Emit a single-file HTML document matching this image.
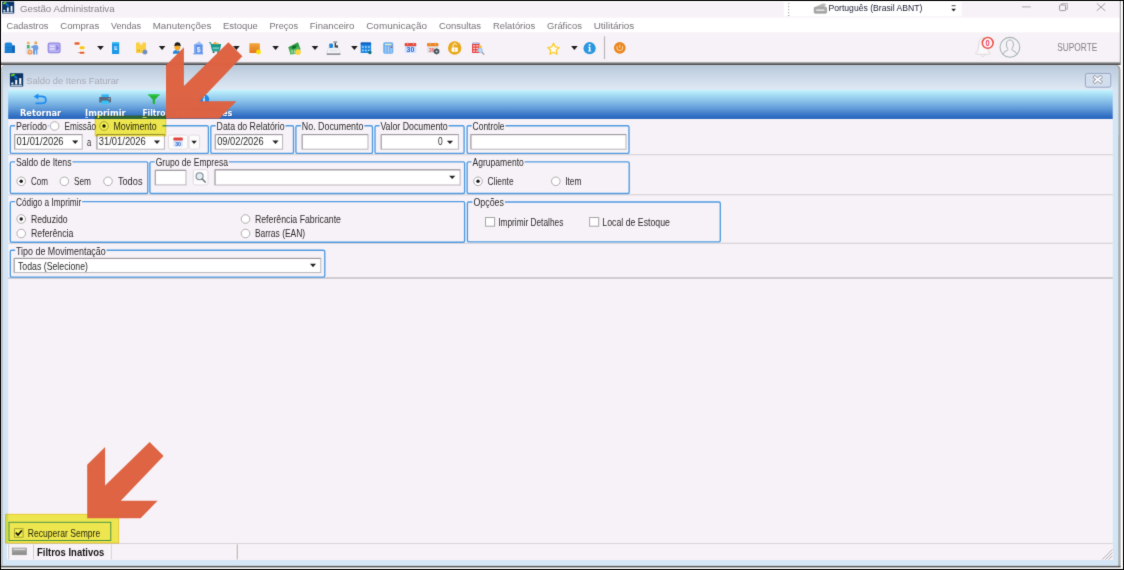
<!DOCTYPE html>
<html lang="pt-BR"><head><meta charset="utf-8"><title>Gestão Administrativa - Saldo de Itens Faturar</title>
<style>html,body{margin:0;padding:0;background:#000;overflow:hidden}body{width:1124px;height:570px;font-family:"Liberation Sans",sans-serif}svg{display:block}</style>
</head><body>
<svg width="1124" height="570" viewBox="0 0 1124 570" role="img" aria-label="Gestão Administrativa">
<defs>
<linearGradient id="gCap" x1="0" y1="0" x2="0" y2="1"><stop offset="0" stop-color="#b9c9da"/><stop offset="0.55" stop-color="#cfdbea"/><stop offset="1" stop-color="#e0e9f5"/></linearGradient>
<linearGradient id="gBand" x1="0" y1="0" x2="0" y2="1"><stop offset="0" stop-color="#c4f5ff"/><stop offset="0.18" stop-color="#a6dcf4"/><stop offset="0.6" stop-color="#68a2dc"/><stop offset="0.92" stop-color="#2e6cc2"/><stop offset="1" stop-color="#2d69bd"/></linearGradient>
<linearGradient id="gSep" x1="0" y1="0" x2="0" y2="1"><stop offset="0" stop-color="#e9e5e9"/><stop offset="0.4" stop-color="#8c8a8c"/><stop offset="1" stop-color="#3c3c3c"/></linearGradient>
<linearGradient id="gFrame" x1="0" y1="0" x2="0" y2="1"><stop offset="0" stop-color="#bac9da"/><stop offset="0.34" stop-color="#d6e4f3"/><stop offset="1" stop-color="#d4e6f6"/></linearGradient>
<filter id="soft" x="0" y="0" width="100%" height="100%" color-interpolation-filters="sRGB"><feConvolveMatrix order="3" kernelMatrix="0.011 0.084 0.011 0.084 0.62 0.084 0.011 0.084 0.011" divisor="1" edgeMode="duplicate" preserveAlpha="true"/></filter>
</defs>
<g filter="url(#soft)">
<rect x="0.00" y="0.00" width="1124.00" height="570.00" fill="#000000" />
<rect x="1.00" y="1.00" width="1122.00" height="568.00" fill="#ffffff" />
<rect x="2.00" y="2.00" width="1118.60" height="565.40" fill="#f7f2f7" />
<rect x="2.00" y="2.00" width="1118.00" height="15.60" fill="#f7f2f7" />
<rect x="1.00" y="17.60" width="1119.00" height="15.00" fill="#ffffff" />
<rect x="2.00" y="32.60" width="1118.00" height="29.00" fill="#f7f2f7" />
<rect x="1.00" y="61.60" width="1119.60" height="3.40" fill="url(#gSep)" />
<line x1="1120.30" y1="1.00" x2="1120.30" y2="65.00" stroke="#9a989a" stroke-width="1.0" />
<path d="M1.2 567.3 V70 Q1.2 64.9 6.4 64.9 H1115.4 Q1120.6 64.9 1120.6 70 V567.3 Z" fill="#a9a9a9"/>
<rect x="1.00" y="70.00" width="1.00" height="497.40" fill="#cfcfcf" />
<rect x="1.20" y="565.80" width="1119.40" height="1.50" fill="#565656" />
<rect x="1.20" y="567.20" width="1119.40" height="0.60" fill="#b4b4b4" />
<path d="M2.2 565.8 V70.2 Q2.2 65.6 6.8 65.6 H1113.8 Q1118.3 65.6 1118.3 70.2 V565.8 Z" fill="#d4e6f6"/>
<path d="M2.2 135 V70.2 Q2.2 65.6 6.8 65.6 H1113.8 Q1118.3 65.6 1118.3 70.2 V135 Z" fill="url(#gFrame)"/>
<rect x="8.20" y="65.60" width="1104.50" height="24.40" fill="url(#gCap)" />
<rect x="2.00" y="72.00" width="1.00" height="493.80" fill="#b9c4ce" />
<rect x="8.20" y="89.80" width="1104.50" height="29.20" fill="url(#gBand)" />
<rect x="8.20" y="119.00" width="1104.50" height="441.00" fill="#f7f2f7" />
<line x1="8.20" y1="559.50" x2="1112.70" y2="559.50" stroke="#fcf9fc" stroke-width="1" />
<rect x="2.10" y="1.40" width="12.10" height="12.10" fill="#0c3363" rx="0.4" />
<ellipse cx="4.76" cy="3.09" rx="2.06" ry="0.97" fill="#62d216" transform="rotate(-18 4.76 3.09)"/>
<ellipse cx="7.30" cy="4.91" rx="2.18" ry="1.09" fill="#0b6fd6" transform="rotate(42 7.30 4.91)"/>
<rect x="3.43" y="9.87" width="1.82" height="1.69" fill="#f6f8fb" />
<rect x="6.94" y="7.45" width="1.82" height="4.11" fill="#f6f8fb" />
<rect x="10.57" y="5.88" width="1.94" height="5.69" fill="#f6f8fb" />
<rect x="2.83" y="11.93" width="10.41" height="1.21" fill="#a9bccf" />
<text x="19.90" y="11.80" font-family='"Liberation Sans", sans-serif' font-size="9.8" fill="#868286" textLength="94.70" lengthAdjust="spacingAndGlyphs" >Gestão Administrativa</text>
<rect x="783.80" y="1.00" width="177.80" height="15.30" fill="#ffffff" />
<rect x="788.20" y="3.20" width="1.00" height="1.00" fill="#8a8a8a" />
<rect x="788.20" y="6.20" width="1.00" height="1.00" fill="#8a8a8a" />
<rect x="788.20" y="9.20" width="1.00" height="1.00" fill="#8a8a8a" />
<rect x="788.20" y="12.20" width="1.00" height="1.00" fill="#8a8a8a" />
<rect x="788.20" y="15.00" width="1.00" height="1.00" fill="#8a8a8a" />
<path d="M815 7.2l7.5-3.6l3.6 0.4l-2 3.2z" fill="#b9b9b9"/>
<rect x="814.20" y="7.20" width="12.40" height="6.00" fill="#a9a9a9" stroke="#8e8e8e" stroke-width="0.6" rx="0.8" />
<rect x="816.20" y="9.40" width="8.40" height="1.50" fill="#e6e6e6" />
<text x="828.50" y="11.00" font-family='"Liberation Sans", sans-serif' font-size="9.8" fill="#20243a" textLength="93.90" lengthAdjust="spacingAndGlyphs" >Português (Brasil ABNT)</text>
<rect x="951.60" y="5.20" width="4.00" height="1.00" fill="#4a4a4a" />
<path d="M951.30 8.80h4.6l-2.30 2.8z" fill="#222"/>
<line x1="1022.00" y1="6.90" x2="1030.70" y2="6.90" stroke="#a19da1" stroke-width="0.9" />
<rect x="1059.60" y="5.00" width="6.00" height="5.60" fill="none" stroke="#8f8b8f" stroke-width="0.9" rx="0.8" />
<path d="M1061.4 5V3.6h6v5.6h-1.6" fill="none" stroke="#a5a1a5" stroke-width="0.8"/>
<path d="M1096.8 3.4l8.4 7.4M1105.2 3.4l-8.4 7.4" stroke="#969296" stroke-width="0.9" fill="none"/>
<text x="6.50" y="28.90" font-family='"Liberation Sans", sans-serif' font-size="9.6" fill="#777377" textLength="41.90" lengthAdjust="spacingAndGlyphs" >Cadastros</text>
<text x="60.20" y="28.90" font-family='"Liberation Sans", sans-serif' font-size="9.6" fill="#777377" textLength="39.00" lengthAdjust="spacingAndGlyphs" >Compras</text>
<text x="111.00" y="28.90" font-family='"Liberation Sans", sans-serif' font-size="9.6" fill="#777377" textLength="30.00" lengthAdjust="spacingAndGlyphs" >Vendas</text>
<text x="152.70" y="28.90" font-family='"Liberation Sans", sans-serif' font-size="9.6" fill="#777377" textLength="58.70" lengthAdjust="spacingAndGlyphs" >Manutenções</text>
<text x="223.00" y="28.90" font-family='"Liberation Sans", sans-serif' font-size="9.6" fill="#777377" textLength="34.80" lengthAdjust="spacingAndGlyphs" >Estoque</text>
<text x="269.50" y="28.90" font-family='"Liberation Sans", sans-serif' font-size="9.6" fill="#777377" textLength="28.50" lengthAdjust="spacingAndGlyphs" >Preços</text>
<text x="309.70" y="28.90" font-family='"Liberation Sans", sans-serif' font-size="9.6" fill="#777377" textLength="44.70" lengthAdjust="spacingAndGlyphs" >Financeiro</text>
<text x="366.20" y="28.90" font-family='"Liberation Sans", sans-serif' font-size="9.6" fill="#777377" textLength="60.80" lengthAdjust="spacingAndGlyphs" >Comunicação</text>
<text x="438.90" y="28.90" font-family='"Liberation Sans", sans-serif' font-size="9.6" fill="#777377" textLength="42.20" lengthAdjust="spacingAndGlyphs" >Consultas</text>
<text x="493.00" y="28.90" font-family='"Liberation Sans", sans-serif' font-size="9.6" fill="#777377" textLength="42.20" lengthAdjust="spacingAndGlyphs" >Relatórios</text>
<text x="547.00" y="28.90" font-family='"Liberation Sans", sans-serif' font-size="9.6" fill="#777377" textLength="34.90" lengthAdjust="spacingAndGlyphs" >Gráficos</text>
<text x="593.70" y="28.90" font-family='"Liberation Sans", sans-serif' font-size="9.6" fill="#777377" textLength="40.60" lengthAdjust="spacingAndGlyphs" >Utilitários</text>
<path d="M97.20 46.05h6.6l-3.30 3.9z" fill="#1c1c1c"/>
<path d="M158.80 46.05h6.6l-3.30 3.9z" fill="#1c1c1c"/>
<path d="M233.10 46.05h6.6l-3.30 3.9z" fill="#1c1c1c"/>
<path d="M272.30 46.05h6.6l-3.30 3.9z" fill="#1c1c1c"/>
<path d="M311.70 46.05h6.6l-3.30 3.9z" fill="#1c1c1c"/>
<path d="M351.10 46.05h6.6l-3.30 3.9z" fill="#1c1c1c"/>
<path d="M571.10 46.05h6.6l-3.30 3.9z" fill="#1c1c1c"/>
<path d="M4.7 44.3Q4.7 42.5 6.5 42.5H10.6Q12.2 42.5 12.2 44.3V45.4H14.7V52.8H4.7Z" fill="#1c86dc"/>
<rect x="12.20" y="45.60" width="2.50" height="7.20" fill="#125fb2" />
<rect x="5.60" y="47.20" width="5.60" height="0.80" fill="#1670c4" />
<rect x="5.60" y="49.40" width="5.60" height="0.80" fill="#1670c4" />
<rect x="4.70" y="51.80" width="10.00" height="1.00" fill="#0f66bb" />
<circle cx="28.3" cy="42.9" r="1.5" fill="#e3b56a"/><circle cx="35.8" cy="42.9" r="1.6" fill="#e0ac62"/>
<path d="M25.6 54V47Q25.6 44.8 28.3 44.8Q31 44.8 31 47V54Z" fill="#dfe6ee"/>
<path d="M27 45h2.6v3.4H27z" fill="#46b46c"/>
<path d="M33 54.4V48.2L31 47.6L31.3 46.6L33.6 45.2Q35.8 44.6 37.8 45.4Q38.6 47 38.3 49.6H37.4V54.4H36V50.6H35.2V54.4Z" fill="#6f9fe0"/>
<rect x="27.60" y="50.20" width="4.80" height="4.20" fill="#ee9a5a" rx="0.8" />
<rect x="29.00" y="51.40" width="2.00" height="1.40" fill="#f9d9c0" />
<path d="M28.8 50.2Q30 48.4 31.2 50.2" fill="none" stroke="#e8905a" stroke-width="0.6"/>
<rect x="48.20" y="43.00" width="11.80" height="9.80" fill="#b9b1f1" stroke="#8b82e2" stroke-width="1.1" rx="1.6" />
<rect x="49.80" y="45.60" width="4.80" height="1.10" fill="#f4f2ff" />
<rect x="49.80" y="48.40" width="4.80" height="1.10" fill="#f4f2ff" />
<rect x="56.40" y="45.00" width="1.10" height="5.40" fill="#7d74e0" />
<path d="M57.2 46.6l2 1.4l-2 1.4z" fill="#7d74e0"/>
<rect x="74.00" y="41.80" width="6.00" height="3.50" fill="#ffffff" />
<rect x="79.00" y="45.70" width="6.00" height="4.10" fill="#ffffff" />
<rect x="76.60" y="51.20" width="8.40" height="3.00" fill="#ffffff" />
<rect x="74.50" y="42.30" width="5.10" height="2.50" fill="#e8602c" rx="0.5" />
<rect x="79.50" y="46.20" width="5.10" height="3.10" fill="#f6c51a" rx="0.8" />
<rect x="79.50" y="51.70" width="4.90" height="2.00" fill="#e65a2a" rx="0.4" />
<rect x="77.20" y="52.40" width="2.30" height="0.70" fill="#9a9a9a" />
<rect x="112.00" y="42.10" width="7.20" height="11.90" fill="#1e98e6" rx="0.6" />
<rect x="112.00" y="42.10" width="7.20" height="1.50" fill="#45c6f6" rx="0.6" />
<path d="M114 47h3.2M114 49.2h3.4M114.6 48l2.4 2" stroke="#e8f6ff" stroke-width="0.9" fill="none"/>
<path d="M136 42.5H140V44.4H142.4V42.5H146V52.9H136Z" fill="#fbd144"/>
<rect x="137.40" y="49.60" width="0.80" height="1.80" fill="#b89a30" />
<rect x="139.00" y="49.60" width="0.80" height="1.80" fill="#b89a30" />
<circle cx="144.9" cy="52.1" r="2.5" fill="#7f95b6"/><circle cx="144.9" cy="52.1" r="1.2" fill="#5f8ad6"/>
<path d="M172.8 53.8Q172.8 50 176.6 50Q180.4 50 180.4 53.8Z" fill="#1e86de"/>
<circle cx="177.4" cy="47.2" r="2.9" fill="#f9a825"/>
<path d="M174.4 46.2Q174.4 42.2 177.5 42.2Q180.7 42.2 180.7 46.2Q177.6 44.6 174.4 46.2Z" fill="#1b1b1b"/>
<path d="M176.2 50.2l1.2 1.6l1.2-1.6z" fill="#f4d24a"/>
<path d="M193.4 45.2L199.4 41.3L203.1 45.2Z" fill="#9fc3f7"/>
<rect x="194.20" y="44.60" width="8.40" height="8.80" fill="#5c90e8" />
<rect x="193.40" y="53.00" width="9.70" height="1.40" fill="#6e9dee" />
<rect x="194.20" y="44.60" width="1.40" height="8.80" fill="#86b0f4" />
<text x="196.70" y="51.90" font-family='"Liberation Sans", sans-serif' font-size="7.0" fill="#f2f7ff" font-weight="bold" >$</text>
<path d="M209.2 42.6l1.6 0.6l1.6 6.8h7l1-5.4h-9.4" fill="none" stroke="#12998a" stroke-width="1.1"/>
<path d="M211.6 44.4H220.6L219.6 49.8H212.6Z" fill="#12998a"/>
<rect x="212.20" y="50.20" width="7.20" height="1.20" fill="#12998a" />
<rect x="213.00" y="47.60" width="6.00" height="0.90" fill="#cfeee9" />
<circle cx="213.6" cy="52.2" r="0.9" fill="#3a4a48"/><circle cx="218.2" cy="52.2" r="0.9" fill="#3a4a48"/>
<circle cx="215" cy="43.3" r="1.3" fill="#f2a33a"/><circle cx="217.4" cy="43.6" r="1.1" fill="#f5b648"/>
<linearGradient id="gOr" x1="0" y1="0" x2="0" y2="1"><stop offset="0" stop-color="#f2a53a"/><stop offset="1" stop-color="#df7a1c"/></linearGradient>
<rect x="249.40" y="43.20" width="10.40" height="9.70" fill="url(#gOr)" rx="0.6" />
<circle cx="258.5" cy="52.0" r="2.4" fill="#ffe100"/>
<path d="M288.2 47.2L298 42.3L300.6 49.4L290.8 54.2Z" fill="#2f9d43"/>
<path d="M289.4 48.6L299.2 46.4L299.8 53.6L290.2 54.6Z" fill="#4db45c"/>
<ellipse cx="294" cy="47.3" rx="2.4" ry="1.4" fill="#0f6a22" transform="rotate(-24 294 47.3)"/>
<rect x="291.40" y="50.00" width="1.20" height="3.40" fill="#a4dcaa" />
<rect x="294.00" y="50.00" width="1.00" height="3.60" fill="#a4dcaa" />
<circle cx="298.0" cy="52.1" r="2.8" fill="#ffd43c"/>
<path d="M326.8 54.4L328.4 47.6H338.6L340.3 54.4Z" fill="#f6f7f9" stroke="#c9cbd0" stroke-width="0.5"/>
<rect x="326.80" y="53.40" width="13.50" height="1.40" fill="#7e8288" />
<rect x="329.20" y="43.40" width="3.80" height="4.60" fill="#1f86de" rx="1.2" />
<rect x="333.40" y="41.20" width="3.80" height="1.80" fill="#9aa0a8" />
<rect x="334.60" y="43.00" width="1.40" height="4.40" fill="#3a3e44" />
<rect x="336.00" y="45.40" width="2.00" height="2.20" fill="#3a3e44" />
<rect x="329.40" y="49.40" width="8.20" height="2.20" fill="#e4e7ec" />
<rect x="360.70" y="42.50" width="10.40" height="10.60" fill="#1f88e2" rx="0.6" />
<rect x="360.70" y="42.50" width="10.40" height="2.10" fill="#115fc0" rx="0.6" />
<rect x="362.00" y="46.20" width="1.80" height="1.60" fill="#9ed2fa" />
<rect x="362.00" y="49.60" width="1.80" height="1.60" fill="#9ed2fa" />
<rect x="365.00" y="46.20" width="1.80" height="1.60" fill="#9ed2fa" />
<rect x="365.00" y="49.60" width="1.80" height="1.60" fill="#9ed2fa" />
<rect x="368.00" y="46.20" width="1.80" height="1.60" fill="#9ed2fa" />
<rect x="368.00" y="49.60" width="1.80" height="1.60" fill="#9ed2fa" />
<circle cx="369.9" cy="52.5" r="1.7" fill="#0f6f74"/>
<rect x="383.20" y="42.30" width="10.10" height="11.40" fill="#6fb0f0" rx="1.6" />
<rect x="385.00" y="43.80" width="6.40" height="1.40" fill="#e8f0c0" />
<rect x="385.40" y="46.60" width="0.90" height="6.00" fill="#b8dafa" />
<rect x="388.00" y="46.60" width="0.90" height="6.00" fill="#b8dafa" />
<rect x="390.60" y="46.60" width="0.90" height="6.00" fill="#b8dafa" />
<circle cx="391.5" cy="47.2" r="0.9" fill="#e0405a"/>
<rect x="404.70" y="43.60" width="11.60" height="9.30" fill="#cfe3ff" rx="0.8" />
<rect x="404.70" y="42.90" width="11.60" height="3.30" fill="#e8473a" rx="1.0" />
<rect x="407.20" y="42.20" width="1.00" height="2.40" fill="#b9c6dc" />
<rect x="412.80" y="42.20" width="1.00" height="2.40" fill="#b9c6dc" />
<text x="406.60" y="52.00" font-family='"Liberation Sans", sans-serif' font-size="6.6" fill="#2a63d2" font-weight="bold" textLength="7.80" lengthAdjust="spacingAndGlyphs" >30</text>
<rect x="427.00" y="43.60" width="11.40" height="9.30" fill="#e3e3e3" rx="0.8" />
<rect x="427.00" y="42.90" width="11.40" height="3.30" fill="#f0821e" rx="1.0" />
<rect x="429.60" y="42.20" width="1.00" height="2.40" fill="#c8c8c8" />
<rect x="434.80" y="42.20" width="1.00" height="2.40" fill="#c8c8c8" />
<text x="429.00" y="52.00" font-family='"Liberation Sans", sans-serif' font-size="6.0" fill="#e8505a" font-weight="bold" textLength="5.40" lengthAdjust="spacingAndGlyphs" >30</text>
<path d="M436.6 48.2l2.7 1.6v3.2l-2.7 1.6l-2.7-1.6v-3.2z" fill="#40535f"/><circle cx="436.6" cy="51.4" r="1.0" fill="#c8d2d8"/>
<circle cx="454.7" cy="48.0" r="6.7" fill="#e9a81a"/>
<rect x="451.60" y="47.60" width="6.20" height="4.20" fill="#fffdf4" rx="0.5" />
<path d="M453.0 47.6V45.6Q453.0 43.6 454.9 43.6Q456.2 43.6 456.6 44.8" fill="none" stroke="#fffdf4" stroke-width="1.0"/>
<rect x="454.30" y="48.80" width="0.80" height="1.80" fill="#e9a81a" />
<rect x="472.00" y="42.70" width="7.60" height="10.20" fill="#e84444" rx="0.6" />
<rect x="472.00" y="42.70" width="7.60" height="1.30" fill="#9fc4f2" rx="0.6" />
<rect x="473.20" y="45.20" width="2.00" height="1.30" fill="#fbd5d5" />
<rect x="476.20" y="45.20" width="2.20" height="1.30" fill="#fbd5d5" />
<rect x="473.20" y="47.80" width="2.00" height="1.30" fill="#fbd5d5" />
<rect x="476.20" y="47.80" width="2.20" height="1.30" fill="#fbd5d5" />
<rect x="473.20" y="50.40" width="2.00" height="1.30" fill="#fbd5d5" />
<rect x="476.20" y="50.40" width="2.20" height="1.30" fill="#fbd5d5" />
<circle cx="480.4" cy="46.8" r="1.5" fill="#f9c22a"/>
<path d="M481.6 51.8l2.6 2.8" stroke="#8a8f98" stroke-width="1.1"/>
<circle cx="480.2" cy="50.3" r="2.2" fill="#bcd9f8" stroke="#8fb4e4" stroke-width="0.7"/>
<path d="M553.5 43.4l1.75 3.55l3.9 0.55l-2.85 2.75l0.7 3.9l-3.5-1.85l-3.5 1.85l0.7-3.9l-2.85-2.75l3.9-0.55z" fill="#fffdf2" stroke="#fcc926" stroke-width="1.25" stroke-linejoin="round"/>
<circle cx="589.6" cy="48.2" r="6.1" fill="#2b97e0"/>
<circle cx="589.6" cy="45.0" r="0.95" fill="#ffffff"/>
<rect x="588.90" y="46.80" width="1.50" height="4.40" fill="#ffffff" />
<rect x="588.20" y="46.80" width="1.40" height="0.80" fill="#ffffff" />
<rect x="588.00" y="50.60" width="3.20" height="0.80" fill="#ffffff" />
<rect x="603.90" y="36.40" width="1.20" height="22.70" fill="#bab6ba" />
<circle cx="619.8" cy="47.8" r="5.9" fill="#e98822"/>
<path d="M617.3 46.0Q616.4 48 617.6 49.6Q619.8 51.4 622 49.6Q623.2 48 622.3 46.0" fill="none" stroke="#f9cf9a" stroke-width="1.1"/>
<rect x="619.30" y="44.60" width="1.00" height="3.40" fill="#f9cf9a" />
<path d="M975.4 53.4Q978.6 51.6 978.6 46.4Q978.6 38.8 983 37.6Q987.4 38.8 987.4 46.4Q987.4 51.6 990.6 53.4Q990.6 54.4 983 54.4Q975.4 54.4 975.4 53.4Z" fill="#fbf8fb" stroke="#d3cfd3" stroke-width="0.8"/>
<path d="M981.2 55.4Q983 58.4 984.8 55.4" fill="none" stroke="#d8d4d8" stroke-width="0.8"/>
<circle cx="987.7" cy="42.9" r="5.4" fill="#fff6f6" stroke="#e8564a" stroke-width="1.6"/>
<text x="985.60" y="46.10" font-family='"Liberation Sans", sans-serif' font-size="8.6" fill="#ee3f6c" font-weight="bold" textLength="4.20" lengthAdjust="spacingAndGlyphs" >0</text>
<circle cx="1009.9" cy="47.3" r="9.9" fill="none" stroke="#a6b6b5" stroke-width="1.1"/>
<path d="M1003.2 54.2Q1003.6 51.2 1007.4 50.4Q1008.2 49.6 1007.6 48.6Q1006.4 46.8 1006.4 44.2Q1006.6 40 1009.9 40Q1013.2 40 1013.4 44.2Q1013.4 46.8 1012.2 48.6Q1011.6 49.6 1012.4 50.4Q1016.2 51.2 1016.6 54.2" fill="none" stroke="#a3b3b2" stroke-width="1.0"/>
<text x="1057.20" y="51.30" font-family='"Liberation Sans", sans-serif' font-size="10.5" fill="#837f83" textLength="40.10" lengthAdjust="spacingAndGlyphs" >SUPORTE</text>
<rect x="9.90" y="73.20" width="13.30" height="13.30" fill="#0c3363" rx="0.4" />
<ellipse cx="12.83" cy="75.06" rx="2.26" ry="1.06" fill="#62d216" transform="rotate(-18 12.83 75.06)"/>
<ellipse cx="15.62" cy="77.06" rx="2.39" ry="1.20" fill="#0b6fd6" transform="rotate(42 15.62 77.06)"/>
<rect x="11.36" y="82.51" width="2.00" height="1.86" fill="#f6f8fb" />
<rect x="15.22" y="79.85" width="2.00" height="4.52" fill="#f6f8fb" />
<rect x="19.21" y="78.12" width="2.13" height="6.25" fill="#f6f8fb" />
<rect x="10.70" y="84.77" width="11.44" height="1.33" fill="#a9bccf" />
<text x="26.20" y="84.00" font-family='"Liberation Sans", sans-serif' font-size="9.8" fill="#a7a9b6" textLength="92.80" lengthAdjust="spacingAndGlyphs" >Saldo de Itens Faturar</text>
<rect x="1085.40" y="73.40" width="25.40" height="13.80" fill="#d3deed" stroke="#98a6c6" stroke-width="1" rx="1.8" />
<path d="M1094.9 77.2l5.6 4.6M1100.5 77.2l-5.6 4.6" stroke="#8d92a0" stroke-width="3.4" stroke-linecap="square" fill="none"/>
<path d="M1094.9 77.2l5.6 4.6M1100.5 77.2l-5.6 4.6" stroke="#fbfbfd" stroke-width="2.0" stroke-linecap="square" fill="none"/>
<text x="20.60" y="116.50" font-family='"DejaVu Sans", "Liberation Sans", sans-serif' font-size="9.3" fill="#27508f" font-weight="bold" textLength="41.20" lengthAdjust="spacingAndGlyphs" opacity="0.5">Retornar</text>
<text x="20.00" y="115.90" font-family='"DejaVu Sans", "Liberation Sans", sans-serif' font-size="9.3" fill="#ffffff" font-weight="bold" textLength="41.20" lengthAdjust="spacingAndGlyphs" >Retornar</text>
<text x="85.60" y="116.50" font-family='"DejaVu Sans", "Liberation Sans", sans-serif' font-size="9.3" fill="#27508f" font-weight="bold" textLength="40.70" lengthAdjust="spacingAndGlyphs" opacity="0.5">Imprimir</text>
<text x="85.00" y="115.90" font-family='"DejaVu Sans", "Liberation Sans", sans-serif' font-size="9.3" fill="#ffffff" font-weight="bold" textLength="40.70" lengthAdjust="spacingAndGlyphs" >Imprimir</text>
<line x1="85.20" y1="117.40" x2="88.00" y2="117.40" stroke="#ffffff" stroke-width="0.8" />
<text x="143.00" y="116.50" font-family='"DejaVu Sans", "Liberation Sans", sans-serif' font-size="9.3" fill="#27508f" font-weight="bold" textLength="23.10" lengthAdjust="spacingAndGlyphs" opacity="0.5">Filtro</text>
<text x="142.40" y="115.90" font-family='"DejaVu Sans", "Liberation Sans", sans-serif' font-size="9.3" fill="#ffffff" font-weight="bold" textLength="23.10" lengthAdjust="spacingAndGlyphs" >Filtro</text>
<line x1="142.60" y1="117.40" x2="146.60" y2="117.40" stroke="#ffffff" stroke-width="0.8" />
<text x="176.00" y="116.50" font-family='"DejaVu Sans", "Liberation Sans", sans-serif' font-size="9.3" fill="#27508f" font-weight="bold" textLength="57.00" lengthAdjust="spacingAndGlyphs" opacity="0.5">Informações</text>
<text x="175.40" y="115.90" font-family='"DejaVu Sans", "Liberation Sans", sans-serif' font-size="9.3" fill="#ffffff" font-weight="bold" textLength="57.00" lengthAdjust="spacingAndGlyphs" >Informações</text>
<path d="M37.6 96.4H41.2Q45.9 96.4 45.9 99.9Q45.9 103.4 41.2 103.4H35.6" fill="none" stroke="#1e8cf0" stroke-width="1.7"/>
<path d="M38.4 93.4V99.4L33.6 96.4Z" fill="#1e8cf0"/>
<rect x="101.40" y="94.40" width="7.40" height="3.20" fill="#2fb4f4" />
<rect x="99.20" y="97.00" width="11.80" height="5.60" fill="#5b6b80" rx="0.8" />
<rect x="101.60" y="100.60" width="7.00" height="3.60" fill="#35c4f8" />
<rect x="108.60" y="98.20" width="1.20" height="1.00" fill="#cfd8e4" />
<path d="M148.0 94.6H159.7L155.0 99.8V104.6L152.7 103.4V99.8Z" fill="#24b436"/>
<rect x="148.00" y="94.40" width="11.70" height="1.20" fill="#2fcf46" />
<circle cx="204.0" cy="99.4" r="5.2" fill="#1e88e8"/>
<circle cx="204.0" cy="96.6" r="0.9" fill="#fff"/>
<rect x="203.30" y="98.20" width="1.40" height="4.20" fill="#ffffff" />
<line x1="8.20" y1="154.70" x2="1112.70" y2="154.70" stroke="#d2ced2" stroke-width="1" />
<line x1="8.20" y1="194.80" x2="1112.70" y2="194.80" stroke="#d2ced2" stroke-width="1" />
<line x1="8.20" y1="243.20" x2="1112.70" y2="243.20" stroke="#cfcbcf" stroke-width="1" />
<line x1="8.20" y1="278.00" x2="1112.70" y2="278.00" stroke="#a9a6a9" stroke-width="1.1" />
<rect x="10.30" y="125.70" width="198.10" height="27.70" fill="none" stroke="#4f9be3" stroke-width="1.35" rx="1.5" />
<rect x="15.10" y="123.70" width="32.80" height="4.00" fill="#f7f2f7" />
<text x="16.00" y="129.80" font-family='"Liberation Sans", sans-serif' font-size="10.4" fill="#2b2b2b" textLength="31.00" lengthAdjust="spacingAndGlyphs" >Período</text>
<rect x="48.50" y="121.00" width="113.90" height="10.00" fill="#f7f2f7" />
<circle cx="54.60" cy="126.00" r="4.3" fill="#ffffff" stroke="#b0acb0" stroke-width="1"/>
<text x="64.60" y="129.80" font-family='"Liberation Sans", sans-serif' font-size="10.4" fill="#2b2b2b" textLength="31.40" lengthAdjust="spacingAndGlyphs" >Emissão</text>
<circle cx="104.00" cy="126.00" r="4.3" fill="#ffffff" stroke="#b0acb0" stroke-width="1"/>
<circle cx="104.00" cy="126.00" r="1.7" fill="#1a1a1a"/>
<text x="113.50" y="129.80" font-family='"Liberation Sans", sans-serif' font-size="10.4" fill="#2b2b2b" textLength="43.10" lengthAdjust="spacingAndGlyphs" >Movimento</text>
<rect x="14.70" y="134.60" width="67.50" height="14.60" fill="#ffffff" stroke="#b9b5ba" stroke-width="1" />
<line x1="14.70" y1="134.60" x2="82.20" y2="134.60" stroke="#9c989d" stroke-width="1" />
<line x1="14.70" y1="134.60" x2="14.70" y2="149.20" stroke="#a8a4a9" stroke-width="1" />
<text x="16.60" y="145.00" font-family='"Liberation Sans", sans-serif' font-size="10.6" fill="#2b2b2b" textLength="47.00" lengthAdjust="spacingAndGlyphs" >01/01/2026</text>
<path d="M72.10 140.50h6.2l-3.10 3.4z" fill="#222"/>
<text x="87.00" y="145.60" font-family='"Liberation Sans", sans-serif' font-size="10.4" fill="#2b2b2b" textLength="4.20" lengthAdjust="spacingAndGlyphs" >a</text>
<rect x="96.90" y="134.60" width="67.50" height="14.60" fill="#ffffff" stroke="#b9b5ba" stroke-width="1" />
<line x1="96.90" y1="134.60" x2="164.40" y2="134.60" stroke="#9c989d" stroke-width="1" />
<line x1="96.90" y1="134.60" x2="96.90" y2="149.20" stroke="#a8a4a9" stroke-width="1" />
<text x="98.80" y="145.00" font-family='"Liberation Sans", sans-serif' font-size="10.6" fill="#2b2b2b" textLength="47.00" lengthAdjust="spacingAndGlyphs" >31/01/2026</text>
<path d="M153.90 140.50h6.2l-3.10 3.4z" fill="#222"/>
<rect x="168.40" y="135.00" width="19.40" height="14.20" fill="#fdfcfd" stroke="#dcd8dc" stroke-width="0.9" rx="2.2" />
<rect x="173.40" y="138.40" width="9.40" height="8.40" fill="#d7e6fb" rx="0.6" />
<rect x="173.40" y="137.60" width="9.40" height="3.00" fill="#e2453c" rx="0.8" />
<text x="175.20" y="146.20" font-family='"Liberation Sans", sans-serif' font-size="5.4" fill="#2f66cf" font-weight="bold" textLength="5.80" lengthAdjust="spacingAndGlyphs" >30</text>
<rect x="189.00" y="135.00" width="10.60" height="14.20" fill="#fdfcfd" stroke="#dcd8dc" stroke-width="0.9" rx="2.2" />
<path d="M191.30 140.70h5.6l-2.80 3.2z" fill="#222"/>
<rect x="210.80" y="125.70" width="82.70" height="27.70" fill="none" stroke="#4f9be3" stroke-width="1.35" rx="1.5" />
<rect x="215.70" y="123.70" width="69.80" height="4.00" fill="#f7f2f7" />
<text x="216.60" y="129.80" font-family='"Liberation Sans", sans-serif' font-size="10.4" fill="#2b2b2b" textLength="68.00" lengthAdjust="spacingAndGlyphs" >Data do Relatório</text>
<rect x="215.30" y="134.60" width="67.30" height="14.60" fill="#ffffff" stroke="#b9b5ba" stroke-width="1" />
<line x1="215.30" y1="134.60" x2="282.60" y2="134.60" stroke="#9c989d" stroke-width="1" />
<line x1="215.30" y1="134.60" x2="215.30" y2="149.20" stroke="#a8a4a9" stroke-width="1" />
<text x="217.20" y="145.00" font-family='"Liberation Sans", sans-serif' font-size="10.6" fill="#2b2b2b" textLength="46.40" lengthAdjust="spacingAndGlyphs" >09/02/2026</text>
<path d="M272.40 140.50h6.2l-3.10 3.4z" fill="#222"/>
<rect x="295.90" y="125.70" width="76.60" height="27.70" fill="none" stroke="#4f9be3" stroke-width="1.35" rx="1.5" />
<rect x="300.90" y="123.70" width="63.40" height="4.00" fill="#f7f2f7" />
<text x="301.80" y="129.80" font-family='"Liberation Sans", sans-serif' font-size="10.4" fill="#2b2b2b" textLength="61.60" lengthAdjust="spacingAndGlyphs" >No. Documento</text>
<rect x="302.20" y="134.60" width="65.80" height="14.60" fill="#ffffff" stroke="#b9b5ba" stroke-width="1" />
<line x1="302.20" y1="134.60" x2="368.00" y2="134.60" stroke="#9c989d" stroke-width="1" />
<line x1="302.20" y1="134.60" x2="302.20" y2="149.20" stroke="#a8a4a9" stroke-width="1" />
<rect x="375.00" y="125.70" width="89.10" height="27.70" fill="none" stroke="#4f9be3" stroke-width="1.35" rx="1.5" />
<rect x="379.50" y="123.70" width="69.10" height="4.00" fill="#f7f2f7" />
<text x="380.40" y="129.80" font-family='"Liberation Sans", sans-serif' font-size="10.4" fill="#2b2b2b" textLength="67.30" lengthAdjust="spacingAndGlyphs" >Valor Documento</text>
<rect x="381.20" y="134.60" width="77.20" height="14.60" fill="#ffffff" stroke="#b9b5ba" stroke-width="1" />
<line x1="381.20" y1="134.60" x2="458.40" y2="134.60" stroke="#9c989d" stroke-width="1" />
<line x1="381.20" y1="134.60" x2="381.20" y2="149.20" stroke="#a8a4a9" stroke-width="1" />
<text x="438.00" y="145.00" font-family='"Liberation Sans", sans-serif' font-size="10.6" fill="#2b2b2b" textLength="4.70" lengthAdjust="spacingAndGlyphs" >0</text>
<path d="M446.90 140.70h6.2l-3.10 3.4z" fill="#222"/>
<rect x="467.10" y="125.70" width="161.90" height="27.70" fill="none" stroke="#4f9be3" stroke-width="1.35" rx="1.5" />
<rect x="471.70" y="123.70" width="33.70" height="4.00" fill="#f7f2f7" />
<text x="472.60" y="129.80" font-family='"Liberation Sans", sans-serif' font-size="10.4" fill="#2b2b2b" textLength="31.90" lengthAdjust="spacingAndGlyphs" >Controle</text>
<rect x="470.90" y="134.60" width="155.10" height="14.60" fill="#ffffff" stroke="#b9b5ba" stroke-width="1" />
<line x1="470.90" y1="134.60" x2="626.00" y2="134.60" stroke="#9c989d" stroke-width="1" />
<line x1="470.90" y1="134.60" x2="470.90" y2="149.20" stroke="#a8a4a9" stroke-width="1" />
<rect x="10.30" y="161.80" width="137.50" height="31.70" fill="none" stroke="#4f9be3" stroke-width="1.35" rx="1.5" />
<rect x="15.10" y="159.80" width="57.30" height="4.00" fill="#f7f2f7" />
<text x="16.00" y="166.30" font-family='"Liberation Sans", sans-serif' font-size="10.4" fill="#2b2b2b" textLength="55.50" lengthAdjust="spacingAndGlyphs" >Saldo de Itens</text>
<circle cx="21.20" cy="181.30" r="4.3" fill="#ffffff" stroke="#b0acb0" stroke-width="1"/>
<circle cx="21.20" cy="181.30" r="1.7" fill="#1a1a1a"/>
<text x="31.00" y="185.20" font-family='"Liberation Sans", sans-serif' font-size="10.4" fill="#2b2b2b" textLength="17.00" lengthAdjust="spacingAndGlyphs" >Com</text>
<circle cx="64.30" cy="181.30" r="4.3" fill="#ffffff" stroke="#b0acb0" stroke-width="1"/>
<text x="74.00" y="185.20" font-family='"Liberation Sans", sans-serif' font-size="10.4" fill="#2b2b2b" textLength="17.00" lengthAdjust="spacingAndGlyphs" >Sem</text>
<circle cx="108.00" cy="181.30" r="4.3" fill="#ffffff" stroke="#b0acb0" stroke-width="1"/>
<text x="117.90" y="185.20" font-family='"Liberation Sans", sans-serif' font-size="10.4" fill="#2b2b2b" textLength="24.60" lengthAdjust="spacingAndGlyphs" >Todos</text>
<rect x="149.90" y="161.80" width="314.70" height="31.70" fill="none" stroke="#4f9be3" stroke-width="1.35" rx="1.5" />
<rect x="154.80" y="159.80" width="74.10" height="4.00" fill="#f7f2f7" />
<text x="155.70" y="166.30" font-family='"Liberation Sans", sans-serif' font-size="10.4" fill="#2b2b2b" textLength="72.30" lengthAdjust="spacingAndGlyphs" >Grupo de Empresa</text>
<rect x="155.30" y="170.30" width="30.70" height="14.60" fill="#ffffff" stroke="#b9b5ba" stroke-width="1" />
<line x1="155.30" y1="170.30" x2="186.00" y2="170.30" stroke="#9c989d" stroke-width="1" />
<line x1="155.30" y1="170.30" x2="155.30" y2="184.90" stroke="#a8a4a9" stroke-width="1" />
<rect x="193.20" y="169.60" width="14.80" height="15.40" fill="#fdfcfd" stroke="#dcd8dc" stroke-width="0.9" rx="2.2" />
<circle cx="199.6" cy="176.2" r="3.5" fill="#e3ecf2" stroke="#7f8a92" stroke-width="1.1"/>
<path d="M202.2 178.9l3.0 3.2" stroke="#6d767e" stroke-width="1.5" stroke-linecap="round"/>
<rect x="215.00" y="169.80" width="245.10" height="15.20" fill="#ffffff" stroke="#b9b5ba" stroke-width="1" />
<line x1="215.00" y1="169.80" x2="460.10" y2="169.80" stroke="#9c989d" stroke-width="1" />
<line x1="215.00" y1="169.80" x2="215.00" y2="185.00" stroke="#a8a4a9" stroke-width="1" />
<path d="M449.10 175.70h6.2l-3.10 3.4z" fill="#222"/>
<rect x="467.10" y="161.80" width="162.10" height="31.70" fill="none" stroke="#4f9be3" stroke-width="1.35" rx="1.5" />
<rect x="471.60" y="159.80" width="53.10" height="4.00" fill="#f7f2f7" />
<text x="472.50" y="166.30" font-family='"Liberation Sans", sans-serif' font-size="10.4" fill="#2b2b2b" textLength="51.30" lengthAdjust="spacingAndGlyphs" >Agrupamento</text>
<circle cx="478.00" cy="181.30" r="4.3" fill="#ffffff" stroke="#b0acb0" stroke-width="1"/>
<circle cx="478.00" cy="181.30" r="1.7" fill="#1a1a1a"/>
<text x="487.50" y="185.20" font-family='"Liberation Sans", sans-serif' font-size="10.4" fill="#2b2b2b" textLength="26.10" lengthAdjust="spacingAndGlyphs" >Cliente</text>
<circle cx="555.80" cy="181.30" r="4.3" fill="#ffffff" stroke="#b0acb0" stroke-width="1"/>
<text x="565.20" y="185.20" font-family='"Liberation Sans", sans-serif' font-size="10.4" fill="#2b2b2b" textLength="16.30" lengthAdjust="spacingAndGlyphs" >Item</text>
<rect x="10.30" y="201.60" width="454.30" height="40.60" fill="none" stroke="#4f9be3" stroke-width="1.35" rx="1.5" />
<rect x="15.10" y="199.60" width="67.00" height="4.00" fill="#f7f2f7" />
<text x="16.00" y="206.30" font-family='"Liberation Sans", sans-serif' font-size="10.4" fill="#2b2b2b" textLength="65.20" lengthAdjust="spacingAndGlyphs" >Código a Imprimir</text>
<circle cx="21.20" cy="219.00" r="4.3" fill="#ffffff" stroke="#b0acb0" stroke-width="1"/>
<circle cx="21.20" cy="219.00" r="1.7" fill="#1a1a1a"/>
<text x="31.00" y="222.90" font-family='"Liberation Sans", sans-serif' font-size="10.4" fill="#2b2b2b" textLength="36.50" lengthAdjust="spacingAndGlyphs" >Reduzido</text>
<circle cx="21.20" cy="233.50" r="4.3" fill="#ffffff" stroke="#b0acb0" stroke-width="1"/>
<text x="31.00" y="237.40" font-family='"Liberation Sans", sans-serif' font-size="10.4" fill="#2b2b2b" textLength="42.40" lengthAdjust="spacingAndGlyphs" >Referência</text>
<circle cx="245.50" cy="219.00" r="4.3" fill="#ffffff" stroke="#b0acb0" stroke-width="1"/>
<text x="254.90" y="222.90" font-family='"Liberation Sans", sans-serif' font-size="10.4" fill="#2b2b2b" textLength="86.10" lengthAdjust="spacingAndGlyphs" >Referência Fabricante</text>
<circle cx="245.50" cy="233.50" r="4.3" fill="#ffffff" stroke="#b0acb0" stroke-width="1"/>
<text x="254.90" y="237.40" font-family='"Liberation Sans", sans-serif' font-size="10.4" fill="#2b2b2b" textLength="50.30" lengthAdjust="spacingAndGlyphs" >Barras (EAN)</text>
<rect x="467.40" y="202.00" width="252.90" height="39.80" fill="none" stroke="#4f9be3" stroke-width="1.35" rx="1.5" />
<rect x="472.50" y="200.00" width="32.40" height="4.00" fill="#f7f2f7" />
<text x="473.40" y="206.30" font-family='"Liberation Sans", sans-serif' font-size="10.4" fill="#2b2b2b" textLength="30.60" lengthAdjust="spacingAndGlyphs" >Opções</text>
<rect x="485.50" y="217.50" width="9.10" height="8.70" fill="#ffffff" stroke="#a9a5a9" stroke-width="1" />
<text x="498.20" y="226.00" font-family='"Liberation Sans", sans-serif' font-size="10.4" fill="#2b2b2b" textLength="65.10" lengthAdjust="spacingAndGlyphs" >Imprimir Detalhes</text>
<rect x="589.60" y="217.50" width="9.10" height="8.70" fill="#ffffff" stroke="#a9a5a9" stroke-width="1" />
<text x="602.30" y="226.00" font-family='"Liberation Sans", sans-serif' font-size="10.4" fill="#2b2b2b" textLength="67.70" lengthAdjust="spacingAndGlyphs" >Local de Estoque</text>
<rect x="10.30" y="250.20" width="314.50" height="26.90" fill="none" stroke="#4f9be3" stroke-width="1.35" rx="1.5" />
<rect x="15.10" y="248.20" width="91.50" height="4.00" fill="#f7f2f7" />
<text x="16.00" y="254.60" font-family='"Liberation Sans", sans-serif' font-size="10.4" fill="#2b2b2b" textLength="89.70" lengthAdjust="spacingAndGlyphs" >Tipo de Movimentação</text>
<rect x="14.20" y="258.40" width="306.60" height="14.20" fill="#ffffff" stroke="#b9b5ba" stroke-width="1" />
<line x1="14.20" y1="258.40" x2="320.80" y2="258.40" stroke="#9c989d" stroke-width="1" />
<line x1="14.20" y1="258.40" x2="14.20" y2="272.60" stroke="#a8a4a9" stroke-width="1" />
<text x="18.00" y="269.50" font-family='"Liberation Sans", sans-serif' font-size="10.4" fill="#2b2b2b" textLength="70.00" lengthAdjust="spacingAndGlyphs" >Todas (Selecione)</text>
<path d="M310.00 263.80h6.0l-3.00 3.4z" fill="#222"/>
<rect x="9.00" y="522.30" width="101.80" height="18.20" fill="#f7f2f7" stroke="#4f9be3" stroke-width="1" />
<rect x="14.60" y="528.70" width="8.40" height="8.50" fill="#ffffff" stroke="#a9a5a9" stroke-width="1" />
<path d="M15.80 532.65l2.2 2.4l3.8 -4.6" fill="none" stroke="#111" stroke-width="1.7"/>
<text x="27.80" y="537.30" font-family='"Liberation Sans", sans-serif' font-size="10.4" fill="#2b2b2b" textLength="72.40" lengthAdjust="spacingAndGlyphs" >Recuperar Sempre</text>
<line x1="8.20" y1="543.60" x2="1112.70" y2="543.60" stroke="#d6d2d6" stroke-width="1" />
<rect x="8.20" y="544.20" width="1104.50" height="15.80" fill="#f7f2f7" />
<line x1="8.70" y1="544.50" x2="8.70" y2="559.40" stroke="#c6c2c6" stroke-width="1" />
<line x1="7.70" y1="544.50" x2="7.70" y2="559.40" stroke="#ffffff" stroke-width="1" />
<line x1="33.20" y1="544.50" x2="33.20" y2="559.40" stroke="#c2bec2" stroke-width="1" />
<line x1="32.20" y1="544.50" x2="32.20" y2="559.40" stroke="#ffffff" stroke-width="1" />
<line x1="111.00" y1="544.50" x2="111.00" y2="559.40" stroke="#c2bec2" stroke-width="1" />
<line x1="110.00" y1="544.50" x2="110.00" y2="559.40" stroke="#ffffff" stroke-width="1" />
<line x1="237.00" y1="544.50" x2="237.00" y2="559.40" stroke="#8f8b8f" stroke-width="1" />
<line x1="236.00" y1="544.50" x2="236.00" y2="559.40" stroke="#ffffff" stroke-width="1" />
<linearGradient id="gKey" x1="0" y1="0" x2="0" y2="1"><stop offset="0" stop-color="#c9c9c9"/><stop offset="0.35" stop-color="#a2a2a2"/><stop offset="1" stop-color="#858585"/></linearGradient>
<rect x="12.20" y="548.00" width="14.20" height="6.80" fill="url(#gKey)" stroke="#8e8e8e" stroke-width="0.6" />
<line x1="13.60" y1="549.40" x2="25.00" y2="549.40" stroke="#e6e6e6" stroke-width="0.8" />
<text x="37.00" y="555.70" font-family='"Liberation Sans", sans-serif' font-size="10.3" fill="#151515" font-weight="bold" textLength="67.20" lengthAdjust="spacingAndGlyphs" >Filtros Inativos</text>
<line x1="1102.20" y1="559.60" x2="1112.40" y2="549.40" stroke="#a9a5a9" stroke-width="0.9" />
<line x1="1105.40" y1="559.60" x2="1112.40" y2="552.60" stroke="#a9a5a9" stroke-width="0.9" />
<line x1="1108.60" y1="559.60" x2="1112.40" y2="555.80" stroke="#a9a5a9" stroke-width="0.9" />
<rect x="95.20" y="116.00" width="70.60" height="19.90" fill="#f5f350" stroke="#efcf2a" stroke-width="0.9" style="mix-blend-mode:multiply"/>
<rect x="5.60" y="514.30" width="113.10" height="28.70" fill="#f5f350" stroke="#efcf2a" stroke-width="0.9" style="mix-blend-mode:multiply"/>
<polygon points="166.0,118.6 219.4,118.6 236.4,101.2 199.6,101.2 242.4,56.3 228.4,42.3 183.9,86.0 183.9,47.3 166.0,65.2" fill="#dd6241" opacity="0.985"/>
<polygon points="87.2,518.2 140.6,518.2 157.6,500.8 120.8,500.8 163.6,455.9 149.6,441.9 105.1,485.6 105.1,446.9 87.2,464.8" fill="#dd6241" opacity="0.985"/>
</g>
</svg>
</body></html>
